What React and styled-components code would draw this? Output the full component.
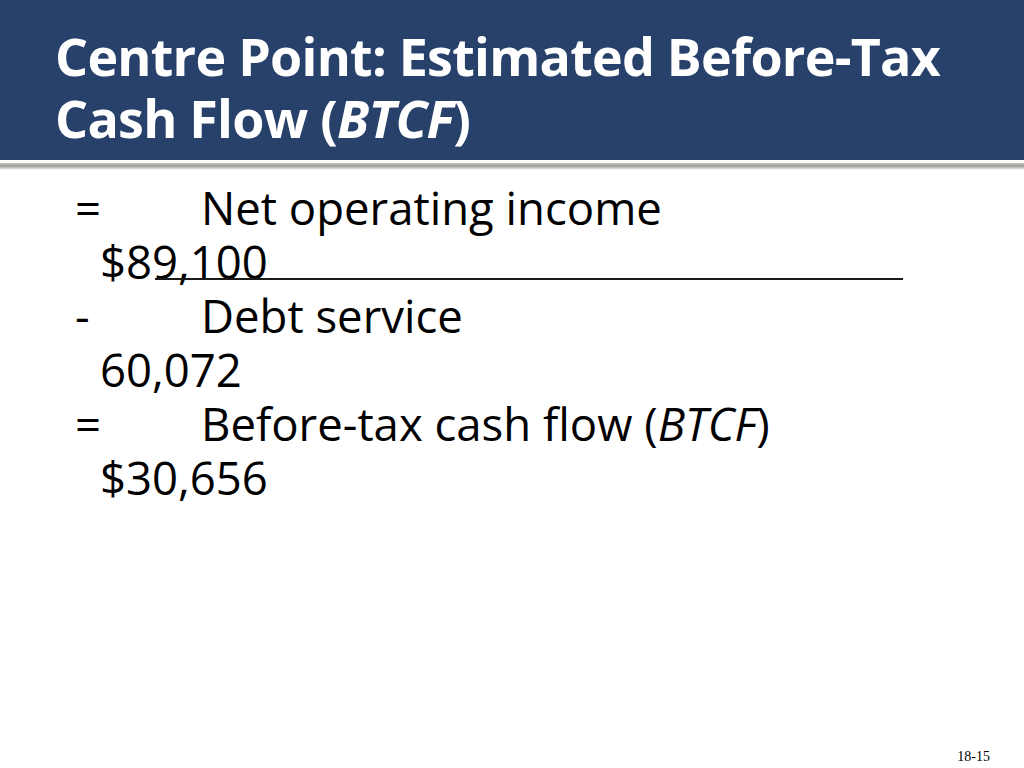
import React from 'react'
import styled, { createGlobalStyle } from 'styled-components'

const GlobalStyle = createGlobalStyle`
  html, body {
    margin: 0;
    padding: 0;
    background: #ffffff;
  }
`

const StSlide = styled.div`
  position: relative;
  width: 1024px;
  height: 768px;
  overflow: hidden;
  background: #ffffff;
  font-family: 'Open Sans', 'Noto Sans', sans-serif;
  color: #000000;
`

const StHeader = styled.header`
  height: 160px;
  box-sizing: border-box;
  padding: 25px 0 0 55px;
  background: #27416a;
`

const StTitle = styled.h1`
  margin: 0;
  font-size: 52px;
  font-weight: 700;
  line-height: 62px;
  color: #ffffff;
  letter-spacing: -0.75px;

  em {
    font-style: italic;
  }
`

const StRule = styled.div`
  height: 7px;
  margin-top: 3px;
  background: linear-gradient(#c9cac5, #9a9b96 40%, #d8d8d5 80%, #ffffff);
`

const StBody = styled.div`
  padding: 10px 0 0 75px;
  font-size: 45.5px;
  line-height: 54px;
`

const StItem = styled.div`
  position: relative;
`

const StLine = styled.div`
  display: flex;
  white-space: nowrap;
`

const StOp = styled.span`
  width: 126px;
  flex-shrink: 0;
`

const StAmount = styled.div`
  padding-left: 25px;
`

const StUnderline = styled.div`
  position: absolute;
  left: 80px;
  top: 98px;
  width: 748px;
  height: 2px;
  background: #1a1a1a;
`

const StPageNo = styled.div`
  position: absolute;
  right: 34px;
  bottom: 3px;
  font-family: 'Liberation Serif', serif;
  font-size: 14px;
  color: #000000;
`

const items = [
  { op: '=', label: 'Net operating income', amount: '$89,100', rule: true },
  { op: '-', label: 'Debt service', amount: '60,072' },
  {
    op: '=',
    label: (
      <>
        Before-tax cash flow (<em>BTCF</em>)
      </>
    ),
    amount: '$30,656',
  },
]

const App = () => (
  <StSlide>
    <GlobalStyle />
    <StHeader>
      <StTitle>
        Centre Point: Estimated Before-Tax
        <br />
        Cash Flow (<em>BTCF</em>)
      </StTitle>
    </StHeader>
    <StRule />
    <StBody>
      {items.map((item, i) => (
        <StItem key={i}>
          <StLine>
            <StOp>{item.op}</StOp>
            <span>{item.label}</span>
          </StLine>
          <StAmount>{item.amount}</StAmount>
          {item.rule && <StUnderline />}
        </StItem>
      ))}
    </StBody>
    <StPageNo>18-15</StPageNo>
  </StSlide>
)

export default App
